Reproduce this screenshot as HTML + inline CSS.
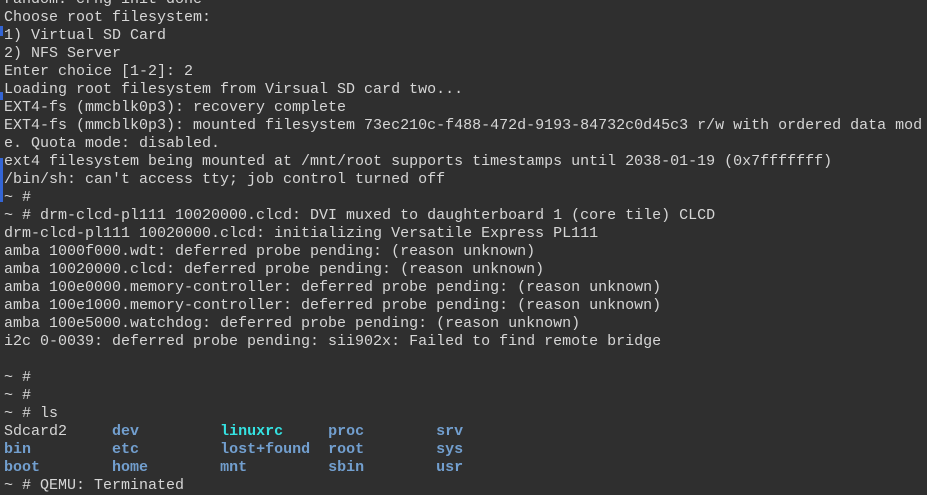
<!DOCTYPE html>
<html><head><meta charset="utf-8"><style>
html,body{margin:0;padding:0;background:#2f2f2f;width:927px;height:488px;overflow:hidden}
pre{margin:0;position:absolute;left:4px;top:-9px;font-family:"Liberation Mono",monospace;font-size:15px;line-height:18px;color:#d6d6d6;white-space:pre}
.b{color:#729fcf;font-weight:bold}.c{color:#34e2e2;font-weight:bold}
.bar{position:absolute;left:0;width:3px;background:#3465d4}
</style></head><body>
<div class="bar" style="top:26px;height:10px"></div>
<div class="bar" style="top:92px;height:8px"></div>
<div class="bar" style="top:158px;height:44px"></div>
<pre>random: crng init done
Choose root filesystem:
1) Virtual SD Card
2) NFS Server
Enter choice [1-2]: 2
Loading root filesystem from Virsual SD card two...
EXT4-fs (mmcblk0p3): recovery complete
EXT4-fs (mmcblk0p3): mounted filesystem 73ec210c-f488-472d-9193-84732c0d45c3 r/w with ordered data mod
e. Quota mode: disabled.
ext4 filesystem being mounted at /mnt/root supports timestamps until 2038-01-19 (0x7fffffff)
/bin/sh: can't access tty; job control turned off
~ #
~ # drm-clcd-pl111 10020000.clcd: DVI muxed to daughterboard 1 (core tile) CLCD
drm-clcd-pl111 10020000.clcd: initializing Versatile Express PL111
amba 1000f000.wdt: deferred probe pending: (reason unknown)
amba 10020000.clcd: deferred probe pending: (reason unknown)
amba 100e0000.memory-controller: deferred probe pending: (reason unknown)
amba 100e1000.memory-controller: deferred probe pending: (reason unknown)
amba 100e5000.watchdog: deferred probe pending: (reason unknown)
i2c 0-0039: deferred probe pending: sii902x: Failed to find remote bridge

~ #
~ #
~ # ls
Sdcard2     <span class="b">dev</span>         <span class="c">linuxrc</span>     <span class="b">proc</span>        <span class="b">srv</span>
<span class="b">bin</span>         <span class="b">etc</span>         <span class="b">lost+found</span>  <span class="b">root</span>        <span class="b">sys</span>
<span class="b">boot</span>        <span class="b">home</span>        <span class="b">mnt</span>         <span class="b">sbin</span>        <span class="b">usr</span>
~ # QEMU: Terminated</pre>
</body></html>
